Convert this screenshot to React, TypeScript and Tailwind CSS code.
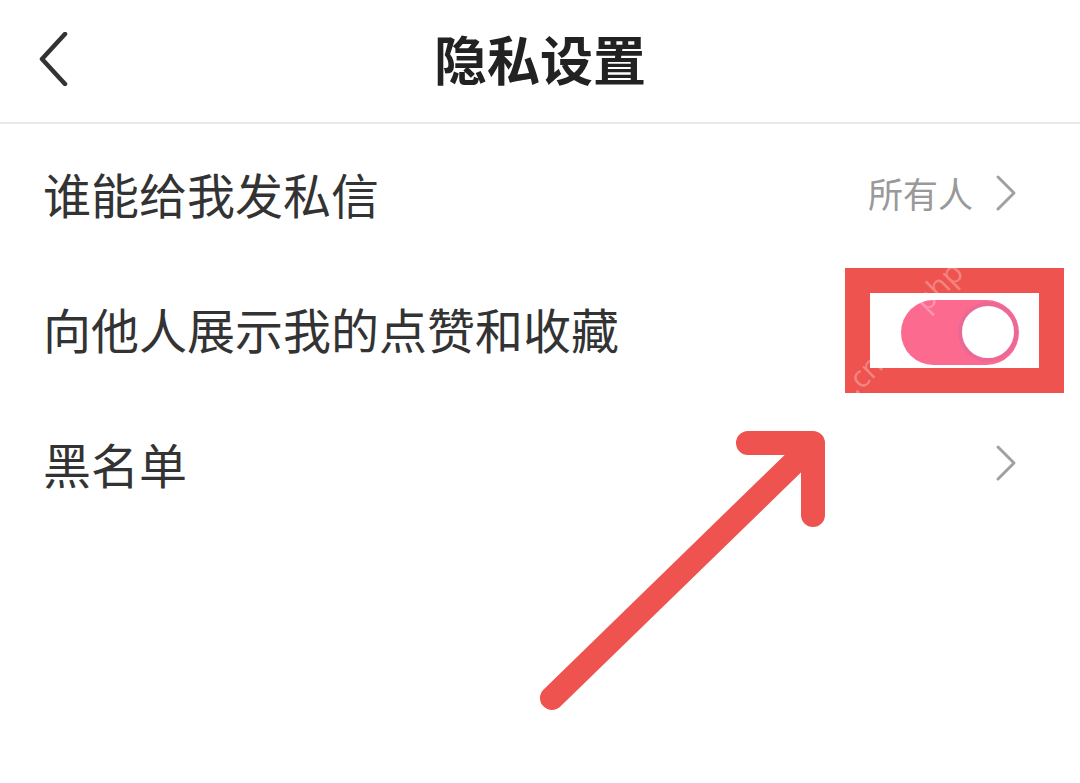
export default function App() {
  return (
    <div className="relative w-[1080px] h-[783px] bg-white overflow-hidden font-['Noto_Sans_CJK_SC','Noto_Sans',sans-serif]">
      {/* Header */}
      <div className="grid grid-cols-[1fr_auto_1fr] items-center h-[124px] border-b-2 border-[#e8e8e8]">
        <div className="pl-[38px] flex items-center -mt-[4px]">
          <svg width="30" height="54" viewBox="0 0 30 54" fill="none">
            <path d="M27 2 L4 27 L27 52" stroke="#333" strokeWidth="4.5" strokeLinecap="round" strokeLinejoin="round" />
          </svg>
        </div>
        <div className="text-[53px] font-bold text-[#222] leading-none -mt-[6px]">隐私设置</div>
        <div />
      </div>

      {/* Rows */}
      <div className="flex flex-col pt-[1px]">
        <div className="h-[135px] flex items-center justify-between pl-[43px] pr-[63px]">
          <span className="text-[48px] text-[#333] leading-none">谁能给我发私信</span>
          <div className="flex items-center gap-[22px]">
            <span className="text-[35px] text-[#999] leading-none">所有人</span>
            <svg width="22" height="38" viewBox="0 0 22 38" fill="none">
              <path d="M3 3 L19 19 L3 35" stroke="#a0a0a0" strokeWidth="3" strokeLinecap="round" strokeLinejoin="round" />
            </svg>
          </div>
        </div>

        <div className="h-[135px] flex items-center justify-between pl-[43px] pr-[16px]">
          <span className="text-[48px] text-[#333] leading-none">向他人展示我的点赞和收藏</span>
          <div className="relative mt-[5px] border-[25px] border-[#ee534f] bg-white pl-[31px] pr-[20px] pt-[7px] pb-[3px]">
            <div className="w-[118px] h-[65px] rounded-full bg-[#fd6a8f] flex items-center justify-end pr-[1px]">
              <div className="w-[60px] h-[60px] rounded-full bg-white border-[4px] border-[#ea6996]" />
            </div>
            <span className="absolute -top-[30px] left-[40px] -rotate-[45deg] text-[30px] text-white/30 font-['Open_Sans',sans-serif]">php</span>
            <span className="absolute bottom-[-28px] left-[-28px] -rotate-[45deg] text-[30px] text-white/30 font-['Open_Sans',sans-serif]">.cn</span>
          </div>
        </div>

        <div className="h-[135px] flex items-center justify-between pl-[43px] pr-[63px]">
          <span className="text-[48px] text-[#333] leading-none">黑名单</span>
          <svg width="22" height="38" viewBox="0 0 22 38" fill="none">
            <path d="M3 3 L19 19 L3 35" stroke="#a0a0a0" strokeWidth="3" strokeLinecap="round" strokeLinejoin="round" />
          </svg>
        </div>
      </div>

      {/* Annotation arrow */}
      <svg className="absolute inset-0 pointer-events-none" width="1080" height="783" viewBox="0 0 1080 783" fill="none">
        <path d="M552 698 L810 447" stroke="#ee534f" strokeWidth="24" strokeLinecap="round" />
        <path d="M748 443 L813 443 L813 515" stroke="#ee534f" strokeWidth="24" strokeLinecap="round" strokeLinejoin="round" />
      </svg>
    </div>
  );
}
